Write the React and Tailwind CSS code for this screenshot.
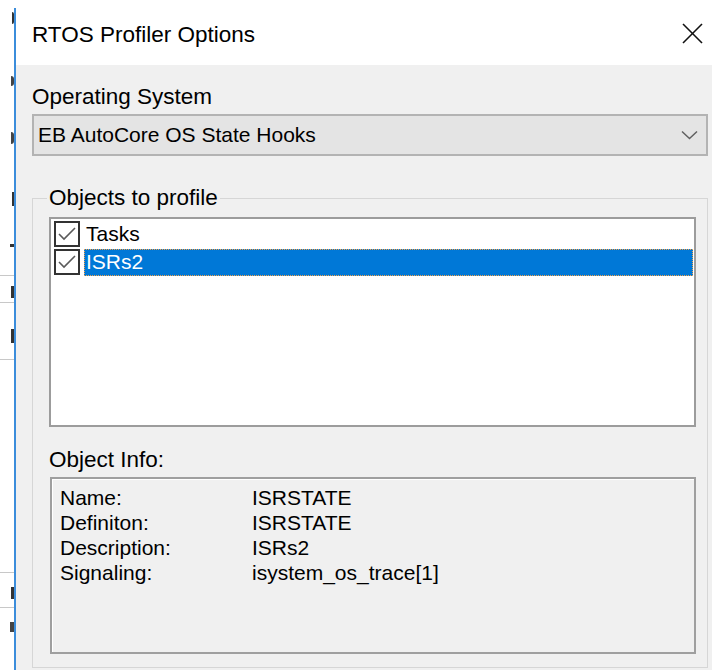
const font = { fontFamily: '"Liberation Sans", Arial, sans-serif' };

// clipped strokes of the window behind the dialog, along its left edge
function BackWindowEdge() {
  return (
    <div className="w-[14px] h-full bg-white overflow-hidden flex flex-col items-end">
      <div className="mt-[12px] w-[2px] h-[12px] bg-[#333] rounded-r" />
      <div className="mt-[52px] w-[3px] h-[10px] bg-[#444] rounded-r-full" />
      <div className="mt-[46px] w-[3px] h-[12px] bg-[#444] rounded-r-full" />
      <div className="mt-[48px] w-[2px] h-[14px] bg-[#333]" />
      <div className="mt-[38px] w-[4px] h-[3px] bg-[#333]" />
      <div className="mt-[28px] h-px w-full bg-[#c8c8c8]" />
      <div className="mt-[10px] w-[3px] h-[12px] bg-[#333]" />
      <div className="mt-[4px] h-px w-full bg-[#c8c8c8]" />
      <div className="mt-[26px] w-[3px] h-[14px] bg-[#333]" />
      <div className="mt-[16px] h-px w-full bg-[#c8c8c8]" />
      <div className="mt-[212px] h-px w-full bg-[#c8c8c8]" />
      <div className="mt-[14px] w-[3px] h-[12px] bg-[#333]" />
      <div className="mt-[8px] h-px w-full bg-[#c8c8c8]" />
      <div className="mt-[14px] w-[4px] h-[10px] bg-[#444]" />
    </div>
  );
}

function CheckBox() {
  return (
    <div className="w-[26px] h-[26px] shrink-0 border-2 border-[#333] bg-white flex items-center justify-center">
      <svg width="20" height="20" viewBox="0 0 20 20" fill="none" stroke="#5a5a5a" strokeWidth="1.6">
        <polyline points="2,10 7,15 18,4" />
      </svg>
    </div>
  );
}

function ListRow({ label, selected }) {
  return (
    <div className="h-[28px] flex items-center">
      <CheckBox />
      <div
        className={
          selected
            ? 'ml-[4px] flex-1 h-[27px] flex items-center px-[2px] bg-[#0078d7] text-white outline-1 outline-dotted outline-[#f3a24a] -outline-offset-1'
            : 'ml-[4px] flex-1 h-[27px] flex items-center px-[2px] text-black'
        }
      >
        {label}
      </div>
    </div>
  );
}

const info = [
  ['Name:', 'ISRSTATE'],
  ['Definiton:', 'ISRSTATE'],
  ['Description:', 'ISRs2'],
  ['Signaling:', 'isystem_os_trace[1]'],
];

export default function App() {
  return (
    <div className="w-[712px] h-[670px] flex bg-white overflow-hidden text-black" style={font}>
      <BackWindowEdge />
      <div className="w-[2px] mt-[8px] bg-[#3b8ddb]" />

      <div className="flex-1 flex flex-col">
        {/* title bar */}
        <div className="h-[65px] bg-white flex justify-between items-start">
          <div className="pl-[16px] pt-[22px] text-[22.5px] leading-[26px]">RTOS Profiler Options</div>
          <svg className="mt-[23px] mr-[9px]" width="21" height="21" viewBox="0 0 21 21" stroke="#111" strokeWidth="1.6">
            <line x1="1" y1="1" x2="20" y2="20" />
            <line x1="20" y1="1" x2="1" y2="20" />
          </svg>
        </div>

        {/* dialog body */}
        <div className="flex-1 bg-[#f0f0f0] pl-[16px] pr-[4px] pt-[19px] pb-[2px] flex flex-col">
          <div className="text-[22.5px] leading-[26px]">Operating System</div>
          <div className="mt-[4px] h-[42px] border-2 border-[#b3b3b3] bg-[#e4e4e4] flex items-center justify-between pl-[4px] pr-[8px] text-[21px]">
            <span>EB AutoCore OS State Hooks</span>
            <svg width="17" height="10" viewBox="0 0 17 10" fill="none" stroke="#606060" strokeWidth="1.5">
              <polyline points="1,1.5 8.5,8.5 16,1.5" />
            </svg>
          </div>

          <fieldset className="mt-[29px] flex-1 border border-[#d6d6d6] pl-[16px] pr-[11px] pb-[13px] min-w-0">
            <legend className="text-[22.5px] leading-[26px] px-[2px] -ml-[2px]">Objects to profile</legend>

            <div className="mt-[6px] h-[210px] border-2 border-[#9c9c9c] bg-white pt-[1px] pl-[3px] pr-[1px] text-[21px]">
              <ListRow label="Tasks" />
              <ListRow label="ISRs2" selected />
            </div>

            <div className="mt-[20px] text-[22.5px] leading-[26px]">Object Info:</div>
            <div className="mt-[4px] ml-[1px] h-[177px] border-2 border-[#9f9f9f] shadow-[inset_1px_1px_0_#ffffff] pl-[8px] pt-[6px] text-[21px] leading-[25px]">
              <div className="grid grid-cols-[192px_1fr]">
                {info.map(([k, v]) => (
                  <div key={k} className="contents">
                    <span>{k}</span>
                    <span>{v}</span>
                  </div>
                ))}
              </div>
            </div>
          </fieldset>
        </div>
      </div>
    </div>
  );
}
